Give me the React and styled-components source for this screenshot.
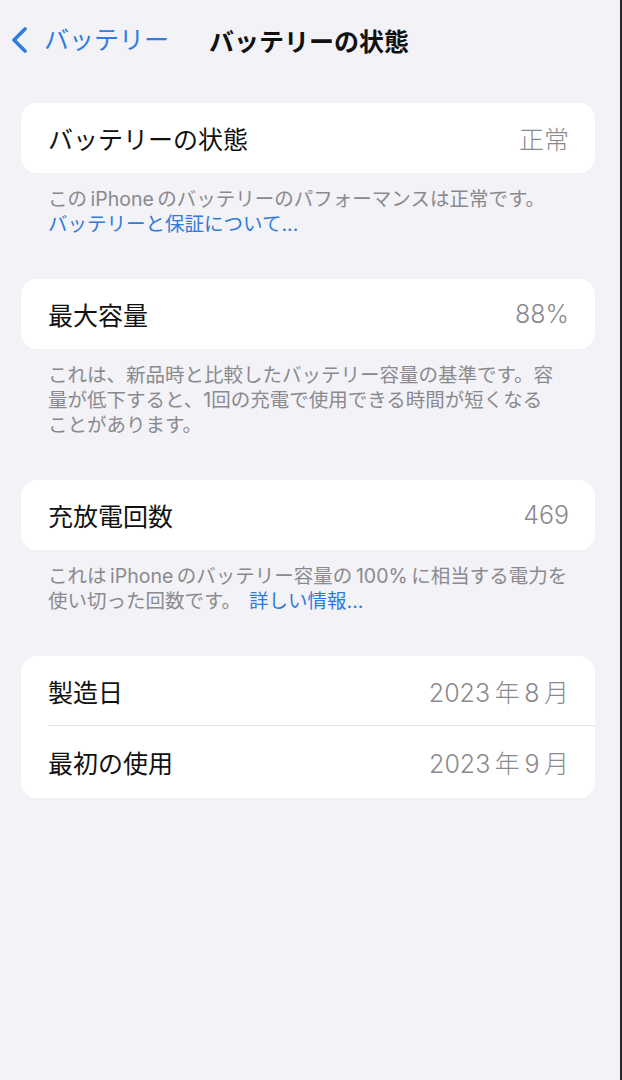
import React from 'react';
import styled, { createGlobalStyle } from 'styled-components';

const GlobalStyle = createGlobalStyle`
  html, body {
    margin: 0;
    padding: 0;
    background: #f2f2f7;
  }
  body {
    font-family: Inter, "Noto Sans CJK JP", "Noto Sans", sans-serif;
    -webkit-font-smoothing: antialiased;
  }
`;

const Page = styled.div`
  box-sizing: border-box;
  width: 622px;
  min-height: 1080px;
  background: #f2f2f7;
  border-right: 2px solid #26262a;
  padding: 0 25px 0 21px;
`;

const NavBar = styled.header`
  display: grid;
  grid-template-columns: 1fr auto 1fr;
  align-items: center;
  height: 80px;
  margin: 0 -25px 0 -21px;
`;

const BackButton = styled.a`
  display: flex;
  align-items: center;
  gap: 14px;
  padding-left: 10px;
  color: #2f7de1;
  font-size: 25px;
  line-height: 1;
  text-decoration: none;
  svg {
    flex: none;
  }
`;

const Title = styled.h1`
  margin: 0 0 0 -2px;
  font-size: 25px;
  font-weight: 700;
  color: #111;
`;

const Section = styled.section`
  margin-top: ${p => p.$first ? '23px' : '42px'};
`;

const Card = styled.div`
  background: #fff;
  border-radius: 16px;
  overflow: hidden;
`;

const Row = styled.div`
  display: flex;
  align-items: center;
  justify-content: space-between;
  height: ${p => p.$h || 70}px;
  padding-right: 26px;
  border-top: ${p => p.$divider ? '1px solid #e3e3e7' : 'none'};
  margin-left: ${p => p.$divider ? '27px' : 0};
  padding-left: ${p => p.$divider ? 0 : '27px'};
`;

const Label = styled.span`
  font-size: 25px;
  color: #111;
`;

const Value = styled.span`
  font-size: 25px;
  font-weight: 300;
  color: #8a8a8e;
`;

const Footer = styled.p`
  margin: 0;
  padding: 14px 20px 0 27px;
  font-size: 19.5px;
  line-height: 25px;
  color: #8a8a8e;
`;

const Link = styled.a`
  color: #2f7bdb;
  text-decoration: none;
  margin-left: ${p => p.$gap ? '8px' : 0};
`;

const Chevron = () => (
  <svg width="20" height="26" viewBox="0 0 20 26" fill="none">
    <polyline points="15,2 4,13 15,24" stroke="#2f7de1" strokeWidth="3.6" strokeLinecap="round" strokeLinejoin="round" />
  </svg>
);

// thin space, as iOS puts between Latin and Japanese text
const t = '\u2009';

const App = () => {
  return (
    <>
      <GlobalStyle />
      <Page>
        <NavBar>
          <BackButton href="#">
            <Chevron />
            バッテリー
          </BackButton>
          <Title>バッテリーの状態</Title>
          <span />
        </NavBar>

        <Section $first>
          <Card>
            <Row>
              <Label>バッテリーの状態</Label>
              <Value>正常</Value>
            </Row>
          </Card>
          <Footer>
            {`この${t}iPhone${t}のバッテリーのパフォーマンスは正常です。`}<br />
            <Link href="#">バッテリーと保証について...</Link>
          </Footer>
        </Section>

        <Section>
          <Card>
            <Row>
              <Label>最大容量</Label>
              <Value>88%</Value>
            </Row>
          </Card>
          <Footer>
            これは、新品時と比較したバッテリー容量の基準です。容<br />
            量が低下すると、1回の充電で使用できる時間が短くなる<br />
            ことがあります。
          </Footer>
        </Section>

        <Section>
          <Card>
            <Row>
              <Label>充放電回数</Label>
              <Value>469</Value>
            </Row>
          </Card>
          <Footer>
            {`これは${t}iPhone${t}のバッテリー容量の${t}100%${t}に相当する電力を`}<br />
            使い切った回数です。<Link href="#" $gap>詳しい情報...</Link>
          </Footer>
        </Section>

        <Section>
          <Card>
            <Row $h={69}>
              <Label>製造日</Label>
              <Value>{`2023${t}年${t}8${t}月`}</Value>
            </Row>
            <Row $h={72} $divider>
              <Label>最初の使用</Label>
              <Value>{`2023${t}年${t}9${t}月`}</Value>
            </Row>
          </Card>
        </Section>
      </Page>
    </>
  );
};

export default App;
